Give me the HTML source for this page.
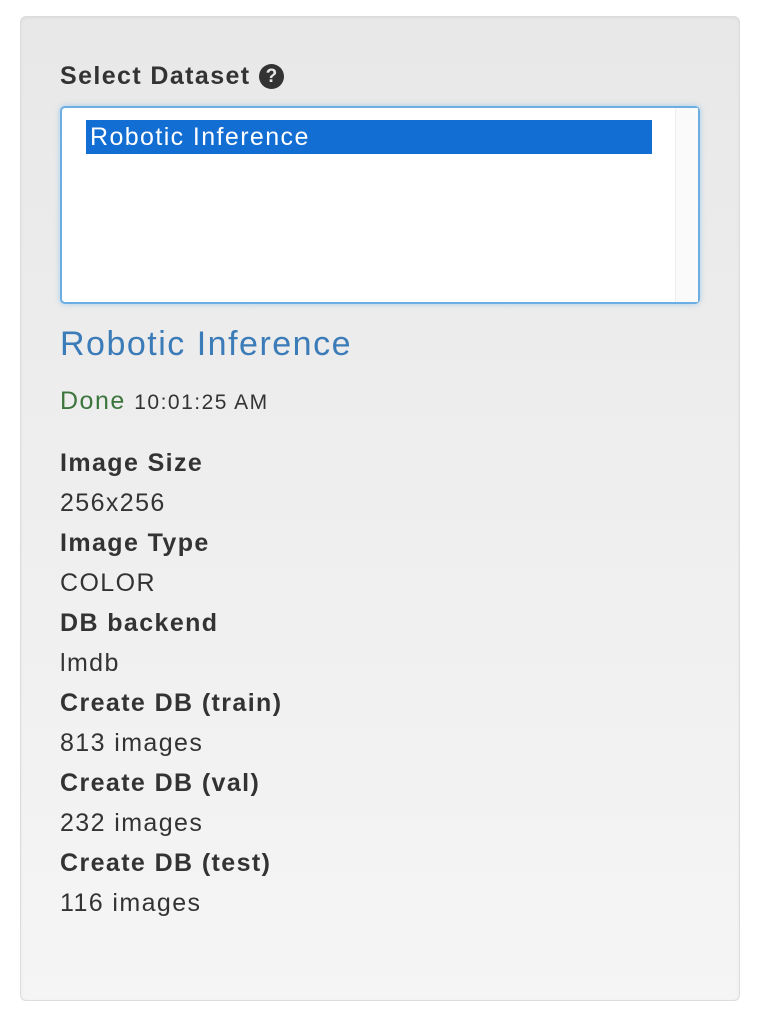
<!DOCTYPE html>
<html><head><style>
body{margin:0;background:#fff;font-family:"Liberation Sans",sans-serif;color:#333;}
.well{position:absolute;left:20px;top:16px;width:718px;height:983px;border:1px solid #dcdcdc;border-radius:6px;background:linear-gradient(#e8e8e8,#f5f5f5);box-shadow:inset 0 1px 3px rgba(0,0,0,.05);}
.lbl{position:absolute;left:60px;top:60px;font-size:25px;letter-spacing:1.4px;font-weight:bold;line-height:32px;white-space:nowrap;}
.q{display:inline-block;width:25px;height:25px;border-radius:50%;background:#333;color:#e8e8e8;font-size:19px;letter-spacing:0;line-height:25px;text-align:center;vertical-align:2px;}
.sel{position:absolute;left:60px;top:106px;width:636px;height:194px;border:2px solid #6daee2;border-radius:5px;background:#fff;box-shadow:0 0 6px rgba(102,175,233,.5);}
.sb{position:absolute;right:0;top:0;width:22px;height:100%;border-left:1px solid #eee;background:#fafafa;}
.opt{position:absolute;left:24px;top:12px;width:566px;height:34px;background:#136ed4;color:#fff;font-size:25px;letter-spacing:1.4px;line-height:34px;padding-left:4px;box-sizing:border-box;white-space:nowrap;}
h2{position:absolute;left:60px;top:322px;margin:0;font-size:34px;letter-spacing:1.5px;font-weight:normal;color:#3a7bb8;line-height:44px;white-space:nowrap;}
.st{position:absolute;left:60px;top:385px;font-size:25px;letter-spacing:1.5px;line-height:32px;white-space:nowrap;}
.st span{color:#3c763d}
.st small{font-size:21px;color:#333}
.dl{position:absolute;left:60px;top:443px;font-size:25px;letter-spacing:1.4px;line-height:40px;white-space:nowrap;}
.dl b{display:block}
</style></head><body>
<div class="well"></div>
<div class="lbl">Select Dataset <span class="q">?</span></div>
<div class="sel"><div class="opt">Robotic Inference</div><div class="sb"></div></div>
<h2>Robotic Inference</h2>
<div class="st"><span>Done</span> <small>10:01:25 AM</small></div>
<div class="dl">
<b>Image Size</b>256x256
<b>Image Type</b>COLOR
<b>DB backend</b>lmdb
<b>Create DB (train)</b>813 images
<b>Create DB (val)</b>232 images
<b>Create DB (test)</b>116 images
</div>
</body></html>
